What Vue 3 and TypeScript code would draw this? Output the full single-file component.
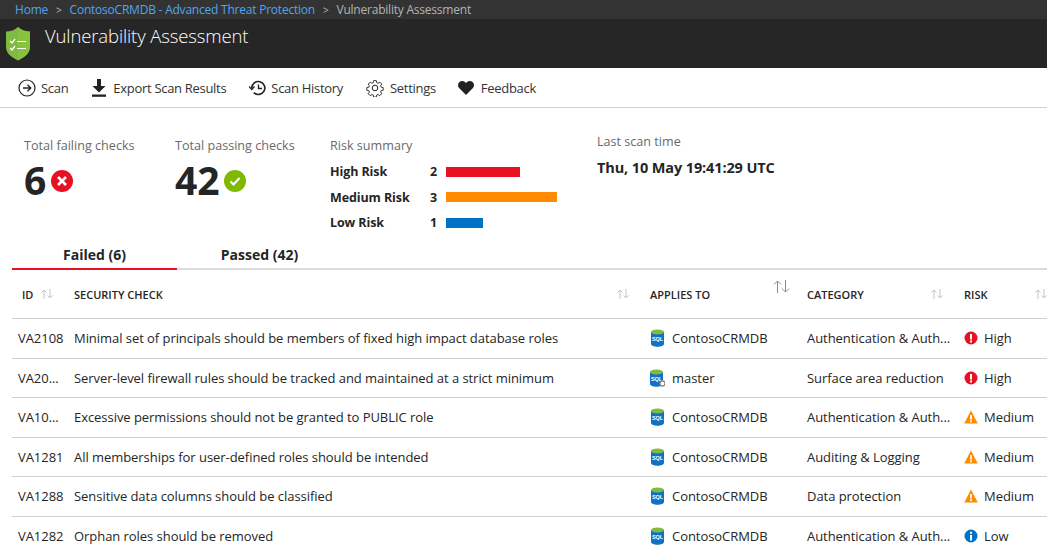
<template>
  <div class="page">
    <nav class="crumbs">
      <a>Home</a><span class="sep">&gt;</span>
      <a>ContosoCRMDB - Advanced Threat Protection</a><span class="sep">&gt;</span>
      <span class="current">Vulnerability Assessment</span>
    </nav>

    <header class="title-bar">
      <svg class="shield" width="26" height="34" viewBox="0 0 26 34">
        <path d="M13 0 C16 3 21 4.500 25 4.500 V20 C25 27 18 31 13 33.500 C8 31 1 27 1 20 V4.500 C5 4.500 10 3 13 0 Z" fill="#7fba42" />
        <path d="M13 0 C16 3 21 4.500 25 4.500 V20 C25 27 18 31 13 33.500 Z" fill="#8cc63f" opacity=".7" />
        <path d="M5 14l2 2 3-4M5 21l2 2 3-4" stroke="#fff" stroke-width="1.3" fill="none" />
        <path d="M12 14.500h9M12 21.500h9" stroke="#fff" stroke-width="1.2" />
      </svg>
      <h1>Vulnerability Assessment</h1>
    </header>

    <div class="toolbar">
      <button class="tool">
        <svg width="18" height="18" viewBox="0 0 18 18" fill="none" stroke="#222" stroke-width="1.2">
          <circle cx="9" cy="9" r="8" />
          <path d="M5 9h7.5M9.5 5.8 12.7 9l-3.2 3.2" stroke-width="1.4" />
        </svg>
        Scan
      </button>
      <button class="tool wide">
        <svg width="16" height="18" viewBox="0 0 16 18" fill="#222">
          <path d="M6 0h4v7h4.5L8 13.5 1.500 7H6z" />
          <rect x="1" y="15.500" width="14" height="2.300" />
        </svg>
        Export Scan Results
      </button>
      <button class="tool narrow">
        <svg width="18" height="16" viewBox="0 0 18 16" fill="none" stroke="#222" stroke-width="1.700">
          <path d="M2.800 8a6.500 6.500 0 1 1 2 4.700" />
          <path d="M0 6.500 2.800 9.500 5.500 6.500" stroke-width="1.300" />
          <path d="M9.500 4.500V8.500H13" stroke-width="1.400" />
        </svg>
        Scan History
      </button>
      <button class="tool wide">
        <svg width="18" height="18" viewBox="0 0 18 18" fill="none" stroke="#222" stroke-width="1">
          <circle cx="9" cy="9" r="2.800" />
          <path d="M7.500.8h3l.4 2.300 1.500.7 2-1.300 2.100 2.100-1.300 2 .6 1.500 2.300.4v3l-2.300.4-.6 1.500 1.300 2-2.100 2.100-2-1.300-1.500.6-.4 2.300h-3l-.4-2.300-1.500-.6-2 1.300-2.100-2.100 1.300-2-.6-1.500-2.300-.4v-3l2.300-.4.6-1.500-1.300-2 2.100-2.100 2 1.300 1.500-.7z" transform="translate(.9 .9) scale(.9)" />
        </svg>
        Settings
      </button>
      <button class="tool wider">
        <svg width="16" height="14" viewBox="0 0 16 14" fill="#222">
          <path d="M8 14 1.300 7.300C-.4 5.500-.4 2.800 1.200 1.200 2.900-.4 5.600-.4 7.200 1.200L8 2l.8-.8c1.600-1.600 4.300-1.600 6 0 1.600 1.600 1.600 4.300-.1 6.100z" />
        </svg>
        Feedback
      </button>
    </div>

    <section class="summary">
      <div class="stat failing">
        <div class="label">Total failing checks</div>
        <div class="big">
          6
          <svg width="22" height="22" viewBox="0 0 22 22">
            <circle cx="11" cy="11" r="11" fill="#e81123" />
            <path d="M7 7l8 8M15 7l-8 8" stroke="#fff" stroke-width="2.600" />
          </svg>
        </div>
      </div>
      <div class="stat passing">
        <div class="label">Total passing checks</div>
        <div class="big">
          42
          <svg width="22" height="22" viewBox="0 0 22 22">
            <circle cx="11" cy="11" r="11" fill="#7fba00" />
            <path d="M6.500 11.500l3 3 6-6.500" stroke="#fff" stroke-width="2" fill="none" />
          </svg>
        </div>
      </div>
      <div class="risk-summary">
        <div class="label">Risk summary</div>
        <div v-for="r in riskRows" :key="r.name" class="risk-row">
          <span class="risk-name">{{ r.name }}</span>
          <span class="risk-count">{{ r.count }}</span>
          <span class="risk-bar" :style="{ width: r.count * 37 + 'px', background: r.color }"></span>
        </div>
      </div>
      <div class="last-scan">
        <div class="label">Last scan time</div>
        <div class="scan-time">Thu, 10 May 19:41:29 UTC</div>
      </div>
    </section>

    <div class="tabs">
      <div class="tab active">Failed (6)</div>
      <div class="tab">Passed (42)</div>
    </div>

    <div class="table">
      <div class="row head">
        <div class="cell id-head">ID<SortIcon /></div>
        <div class="cell">SECURITY CHECK<SortIcon class="push" /></div>
        <div class="cell">APPLIES TO<svg class="push big-sort" width="17" height="13" viewBox="0 0 17 13" fill="none" stroke="#8a8a8a"><path d="M4.500 13V1M1 4.500 4.500 1 8 4.500M12.500 0v12M9 8.500l3.500 3.500L16 8.500" /></svg></div>
        <div class="cell">CATEGORY<SortIcon class="push" /></div>
        <div class="cell">RISK<SortIcon class="push last" /></div>
      </div>
      <div v-for="c in checks" :key="c.check" class="row">
        <div class="cell id-cell">{{ c.id }}</div>
        <div class="cell">{{ c.check }}</div>
        <div class="cell">
          <svg class="db" :class="{ shifted: c.system }" width="16" height="18" viewBox="0 0 16 18">
            <path d="M1 3v12c0 1.600 3 2.700 6.500 2.700S14 16.600 14 15V3z" fill="#0f72c4" />
            <ellipse cx="7.500" cy="3" rx="6.500" ry="2.600" fill="#7fba42" />
            <text x="7.500" y="12" text-anchor="middle" class="sql">SQL</text>
            <circle v-if="c.system" cx="13.500" cy="14.500" r="2.500" fill="#fff" stroke="#8a8a8a" stroke-width="1.300" />
          </svg>
          {{ c.target }}
        </div>
        <div class="cell">{{ c.category }}</div>
        <div class="cell">
          <svg v-if="c.risk === 'High'" class="risk-icon" width="14" height="14" viewBox="0 0 14 14">
            <circle cx="7" cy="7" r="6.500" fill="#e81123" />
            <rect x="6" y="3" width="2" height="5.500" fill="#fff" />
            <rect x="6" y="9.500" width="2" height="2" fill="#fff" />
          </svg>
          <svg v-else-if="c.risk === 'Medium'" class="risk-icon" width="14" height="14" viewBox="0 0 14 14">
            <path d="M7 .5 13.800 13.500H.2z" fill="#ff8c00" />
            <rect x="6.100" y="5" width="1.800" height="4.500" fill="#fff" />
            <rect x="6.100" y="10.300" width="1.800" height="1.800" fill="#fff" />
          </svg>
          <svg v-else class="risk-icon" width="14" height="14" viewBox="0 0 14 14">
            <circle cx="7" cy="7" r="6.500" fill="#0072c6" />
            <rect x="6" y="6" width="2" height="5.500" fill="#fff" />
            <rect x="6" y="2.800" width="2" height="2" fill="#fff" />
          </svg>
          {{ c.risk }}
        </div>
      </div>
    </div>
  </div>
</template>

<script setup lang="ts">
import { h } from 'vue';

const SortIcon = () =>
  h('svg', { class: 'sort', width: 12, height: 10, viewBox: '0 0 12 10', fill: 'none', stroke: '#c4c4c4' }, [
    h('path', { d: 'M3 10V1M.5 3.500 3 1l2.500 2.500M9 0v9M6.500 6.500 9 9l2.500-2.500' })
  ]);

const riskRows = [
  { name: 'High Risk', count: 2, color: '#e81123' },
  { name: 'Medium Risk', count: 3, color: '#ff8c00' },
  { name: 'Low Risk', count: 1, color: '#0072c6' }
];

const checks = [
  { id: 'VA2108', check: 'Minimal set of principals should be members of fixed high impact database roles', target: 'ContosoCRMDB', system: false, category: 'Authentication & Auth...', risk: 'High' },
  { id: 'VA20...', check: 'Server-level firewall rules should be tracked and maintained at a strict minimum', target: 'master', system: true, category: 'Surface area reduction', risk: 'High' },
  { id: 'VA10...', check: 'Excessive permissions should not be granted to PUBLIC role', target: 'ContosoCRMDB', system: false, category: 'Authentication & Auth...', risk: 'Medium' },
  { id: 'VA1281', check: 'All memberships for user-defined roles should be intended', target: 'ContosoCRMDB', system: false, category: 'Auditing & Logging', risk: 'Medium' },
  { id: 'VA1288', check: 'Sensitive data columns should be classified', target: 'ContosoCRMDB', system: false, category: 'Data protection', risk: 'Medium' },
  { id: 'VA1282', check: 'Orphan roles should be removed', target: 'ContosoCRMDB', system: false, category: 'Authentication & Auth...', risk: 'Low' }
];
</script>

<style>
html,
body {
  margin: 0;
  overflow: hidden;
  background: #fff;
}
</style>

<style scoped>
.page {
  width: 1047px;
  height: 551px;
  overflow: hidden;
  font-family: "Open Sans", "Liberation Sans", sans-serif;
  font-size: 13px;
  color: #252525;
}

.crumbs {
  height: 19px;
  background: #333;
  display: flex;
  align-items: center;
  padding-left: 15px;
  font-size: 12px;
  letter-spacing: -0.22px;
}
.crumbs a {
  color: #4ea5f0;
}
.crumbs .sep {
  color: #bbb;
  margin: 0 8px;
  font-size: 10px;
}
.crumbs .current {
  color: #b4b4b4;
}

.title-bar {
  height: 49px;
  background: #262626;
  display: flex;
  align-items: flex-start;
  padding-left: 5px;
  color: #fff;
}
.shield {
  margin-top: 8px;
}
.title-bar h1 {
  margin: 3px 0 0 14px;
  font-size: 18.5px;
  line-height: 27px;
  font-weight: 300;
  letter-spacing: -0.12px;
}

.toolbar {
  height: 39px;
  border-bottom: 1px solid #cfcfcf;
  display: flex;
  align-items: center;
  padding-left: 18px;
  gap: 23px;
}
.tool {
  border: 0;
  padding: 0;
  background: none;
  font: inherit;
  color: #333;
  display: flex;
  align-items: center;
  gap: 5px;
  letter-spacing: -0.3px;
}
.tool.narrow {
  gap: 4px;
}
.tool.wide {
  gap: 6px;
}
.tool.wider {
  gap: 7px;
  margin-left: -1px;
}

.summary {
  height: 133px;
  display: flex;
  padding-left: 24px;
  box-sizing: border-box;
}
.label {
  color: #6a6a6a;
  font-size: 12.6px;
  line-height: 17px;
}
.stat {
  padding-top: 29px;
}
.failing {
  width: 151px;
}
.passing {
  width: 155px;
}
.big {
  display: flex;
  align-items: center;
  font-size: 39px;
  line-height: 44px;
  font-weight: 700;
  margin-top: 4px;
  gap: 4px;
}
.failing .big {
  gap: 5px;
}
.big svg {
  margin-top: 1px;
}
.risk-summary {
  width: 267px;
  padding-top: 29px;
}
.risk-summary .label {
  margin-bottom: 5px;
}
.risk-row {
  display: flex;
  align-items: center;
  height: 25.500px;
  font-weight: 700;
  font-size: 12.5px;
  letter-spacing: -0.1px;
}
.risk-name {
  width: 100px;
}
.risk-count {
  width: 16px;
}
.risk-bar {
  height: 10px;
}
.last-scan {
  padding-top: 25px;
}
.scan-time {
  font-weight: 700;
  font-size: 14.5px;
  margin-top: 8px;
  letter-spacing: -0.12px;
}

.tabs {
  display: flex;
  margin: 1px 0 0 12px;
  border-bottom: 2px solid #dcdcdc;
  height: 26px;
}
.tab {
  width: 165px;
  text-align: center;
  font-weight: 700;
  font-size: 14px;
  line-height: 26px;
}
.tab.active {
  border-bottom: 2px solid #e81123;
  height: 26px;
}

.table {
  margin-left: 12px;
}
.row {
  display: grid;
  grid-template-columns: 62px 576px 157px 157px 83px;
  height: 39.500px;
  box-sizing: border-box;
  border-bottom: 1px solid #cfcfcf;
  align-items: center;
  letter-spacing: -0.05px;
}
.row.head {
  height: 49px;
  font-size: 11px;
  font-weight: 600;
  letter-spacing: 0;
}
.cell {
  display: flex;
  align-items: center;
  white-space: nowrap;
  min-width: 0;
}
.cell:first-child {
  padding-left: 6px;
  box-sizing: border-box;
}
.id-head {
  padding-left: 10px !important;
}
.id-cell {
  overflow: hidden;
}
.push {
  margin-left: auto;
  margin-right: 21px;
}
.push.last {
  margin-right: 0;
}
.big-sort {
  margin: -16px 17px 0 auto;
}
.id-head :deep(.sort) {
  margin-left: 8px;
}
.db {
  margin-right: 6px;
  flex: none;
}
.db.shifted {
  margin-left: -1px;
  margin-right: 7px;
}
.sql {
  font: 700 5.500px "Liberation Sans", sans-serif;
  fill: #fff;
}
.risk-icon {
  margin-right: 6px;
  flex: none;
}
</style>
